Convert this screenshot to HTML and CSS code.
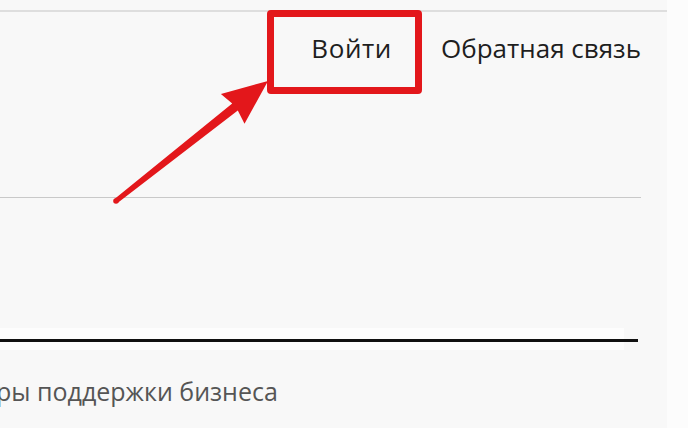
FILE: index.html
```html
<!DOCTYPE html>
<html lang="ru">
<head>
<meta charset="utf-8">
<title>Войти</title>
<link rel="stylesheet" href="styles.css">
</head>
<body>
<div class="page">
  <div class="topline"></div>
  <header class="header">
    <nav class="nav">
      <a class="nav-link nav-link-login" href="#">Войти</a>
      <a class="nav-link" href="#">Обратная связь</a>
    </nav>
  </header>
  <div class="rule-light"></div>
  <div class="tabs">
    <div class="tabs-band"></div>
    <div class="rule-dark"></div>
    <div class="tabs-band tabs-band-low"></div>
  </div>
  <p class="subtitle">ры поддержки бизнеса</p>
  <div class="side-strip"></div>

  <div class="mark-box"></div>
  <svg class="mark-arrow" width="688" height="428" viewBox="0 0 688 428" aria-hidden="true">
    <polygon points="268,81 220.9,94 232.2,103.5 114.5,199 117.5,203 237.8,110.5 244.5,123.8" fill="#e3171b"/>
    <circle cx="116" cy="201" r="2.8" fill="#e3171b"/>
  </svg>
</div>
</body>
</html>
```

FILE: styles.css
```css
html, body {
  margin: 0;
  padding: 0;
}
body {
  background: #f8f8f8;
  font-family: "Open Sans", "Noto Sans", "DejaVu Sans", sans-serif;
  overflow: hidden;
}
.page {
  position: relative;
  width: 688px;
  height: 428px;
  overflow: hidden;
}
.topline {
  margin-top: 10px;
  height: 2px;
  background: #dedede;
}
.header {
  display: flex;
  justify-content: flex-end;
  padding-right: 47px;
}
.nav {
  display: flex;
  gap: 49px;
  padding-top: 19px;
}
.nav-link {
  font-size: 26px;
  line-height: 34px;
  color: #1e1e1e;
  text-decoration: none;
}
.nav-link-login {
  letter-spacing: 0.6px;
}
.rule-light {
  margin-top: 132px;
  width: 641px;
  height: 1px;
  background: #c9c9c9;
}
.tabs {
  margin-top: 130px;
  width: 638px;
}
.tabs-band {
  width: 624px;
  height: 11px;
  background: #fdfdfd;
}
.tabs-band-low {
  height: 8px;
}
.rule-dark {
  height: 3px;
  background: #111111;
}
.subtitle {
  margin: 26px 0 0 -4px;
  font-size: 25px;
  line-height: 30px;
  color: #555555;
  white-space: nowrap;
}
.side-strip {
  position: absolute;
  top: 0;
  right: 0;
  width: 21px;
  height: 100%;
  background: #fcfcfc;
}
.mark-box {
  position: absolute;
  left: 267px;
  top: 10px;
  width: 141px;
  height: 70px;
  border: 7px solid #e3171b;
  border-radius: 4px;
}
.mark-arrow {
  position: absolute;
  left: 0;
  top: 0;
  pointer-events: none;
}
```
